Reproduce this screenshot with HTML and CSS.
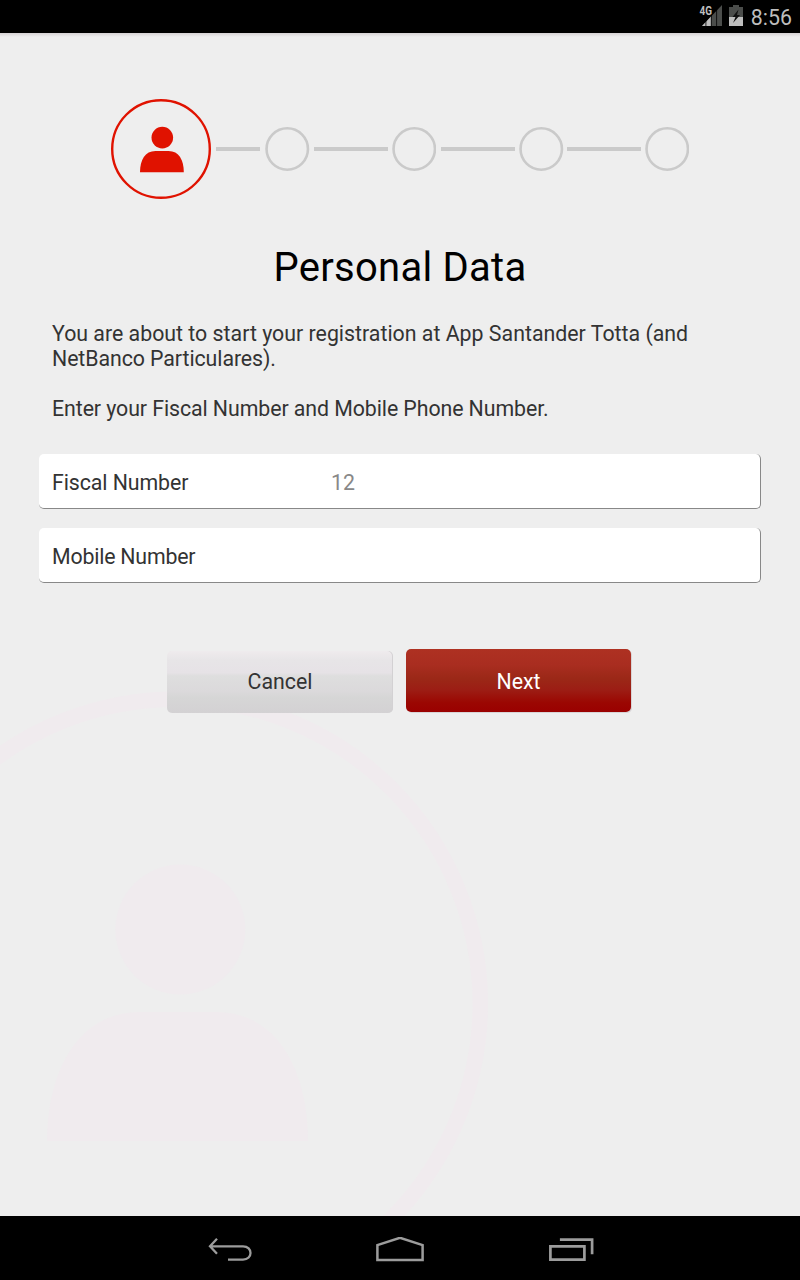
FILE: index.html
```html
<!DOCTYPE html>
<html lang="en">
<head>
<meta charset="utf-8">
<title>Personal Data</title>
<link rel="stylesheet" href="styles.css">
</head>
<body>
<div class="screen">
  <header class="status">
    <svg class="signal" width="26" height="28" viewBox="-2 -5 26 28">
      <path d="M3 21L23 0V21Z" fill="#4b4d4b"/>
      <path d="M3 21L12 11.5V21Z" fill="#bebebe"/>
      <path d="M6.9 0V21M12.3 0V21M17.6 0V21" stroke="#000" stroke-width=".8"/>
      <path d="M0 0H13V10.8H0Z" fill="#000"/>
      <text x="0.5" y="9.8" class="network" textLength="12.5" lengthAdjust="spacingAndGlyphs">4G</text>
    </svg>
    <svg class="battery" width="14" height="21" viewBox="0 0 14 21">
      <path d="M4 0H10V2H14V12H0V2H4Z" fill="#4b4d4b"/>
      <path d="M0 12H14V21H0Z" fill="#bebebe"/>
      <path d="M9.5 4.5L3.5 12H6.5L4 18L11 10H8Z" fill="#111"/>
    </svg>
    <span class="clock">8:56</span>
  </header>
  <main class="content">
    <svg class="watermark" width="488" height="526" viewBox="0 0 488 526">
      <circle cx="176" cy="313.5" r="304.3" fill="none" stroke="#f0ebee" stroke-width="15.5"/>
      <circle cx="180.3" cy="239.5" r="65" fill="#f0ebee"/>
      <path d="M47 451C47 381 78 322 140 322H216C278 322 308 381 308 451Z" fill="#f0ebee"/>
    </svg>
    <div class="steps">
      <svg class="step-active" width="100" height="100" viewBox="0 0 100 100">
        <circle cx="50" cy="50" r="48.8" fill="none" stroke="#e01200" stroke-width="2.4"/>
        <circle cx="51.3" cy="38.6" r="10.8" fill="#e01200"/>
        <path d="M29 73.2C29 61 34 52 44.5 52H57.5C68 52 72.8 61 72.8 73.2Z" fill="#e01200"/>
      </svg>
      <i class="line first"></i>
      <svg class="dot" viewBox="0 0 44 44"><circle cx="22" cy="22" r="20.7"/></svg>
      <i class="line"></i>
      <svg class="dot" viewBox="0 0 44 44"><circle cx="22" cy="22" r="20.7"/></svg>
      <i class="line late"></i>
      <svg class="dot" viewBox="0 0 44 44"><circle cx="22" cy="22" r="20.7"/></svg>
      <i class="line last"></i>
      <svg class="dot" viewBox="0 0 44 44"><circle cx="22" cy="22" r="20.7"/></svg>
    </div>
    <h1 class="title">Personal Data</h1>
    <div class="intro">
      <p>You are about to start your registration at App Santander Totta (and<br><span class="tight">NetBanco Particulares).</span></p>
      <p class="tight">Enter your Fiscal Number and Mobile Phone Number.</p>
    </div>
    <div class="fields">
      <div class="field"><span class="label">Fiscal Number</span><span class="value">12</span></div>
      <div class="field"><span class="label mobile">Mobile Number</span></div>
    </div>
    <div class="actions">
      <button class="btn cancel">Cancel</button>
      <button class="btn next">Next</button>
    </div>
  </main>
  <nav class="nav">
    <svg width="44" height="26" viewBox="0 0 44 26" fill="none" stroke="#9c9c9c" stroke-width="2.3">
      <path d="M9 1.8L2 9.3L9 16.8M2 9.3H35C45 9.3 45 22.6 35 22.6H20"/>
    </svg>
    <svg width="50" height="26" viewBox="0 0 50 26" fill="none" stroke="#9c9c9c" stroke-width="2.5">
      <path d="M1.4 22.9V8.1L24 .8L46.6 8.1V22.9Z"/>
    </svg>
    <svg class="recents" width="46" height="24" viewBox="0 0 46 24" fill="none" stroke="#9c9c9c" stroke-width="2.7">
      <path d="M1.4 8.4H35.4V21.6H1.4ZM10.9 1.6H43.1V16.2"/>
    </svg>
  </nav>
</div>
</body>
</html>
```
FILE: styles.css
```css
* { box-sizing: border-box; }
body { margin: 0; font-family: Roboto, sans-serif; }
.screen {
  width: 800px;
  height: 1280px;
  display: flex;
  flex-direction: column;
  background: #eee;
  overflow: hidden;
}
.status {
  height: 33px;
  flex: none;
  display: flex;
  justify-content: flex-end;
  padding-right: 8px;
  background: #000;
}
.signal { margin-right: 6px; overflow: visible; }
.battery { margin: 5px 8px 0 0; }
.network { font-family: Roboto, sans-serif; font-size: 13px; font-weight: 700; fill: #bebebe; }
.clock { font-size: 21.33px; line-height: 35px; color: #bebebe; }
.content {
  position: relative;
  flex: 1;
  padding-top: 66px;
  background: linear-gradient(#d6d2d4, #eee 4px);
}
.watermark { position: absolute; left: 0; bottom: 0; }
.steps {
  position: relative;
  display: flex;
  align-items: center;
  height: 100px;
  padding-left: 111px;
}
.step-active { flex: none; }
.line { flex: none; width: 74px; height: 4px; margin: 0 4px; background: #cacaca; }
.line.first { width: 44px; margin: 0 5px; }
.line.late { margin-left: 5px; }
.line.last { margin-left: 3px; }
.dot { flex: none; width: 44.5px; height: 44px; fill: none; stroke: #cacaca; stroke-width: 2.6; }
.title {
  position: relative;
  margin: 45px 0 0;
  text-align: center;
  font-size: 40px;
  line-height: 48px;
  font-weight: 400;
  letter-spacing: 0.25px;
  color: #000;
}
.intro {
  position: relative;
  padding: 29px 52px 0;
  font-size: 21.33px;
  line-height: 25px;
  color: #333;
}
.intro p { margin: 0 0 25px; white-space: nowrap; }
.tight { letter-spacing: -0.08px; }
.fields {
  position: relative;
  display: grid;
  gap: 19px;
  padding: 8px 39px 0;
}
.field {
  display: flex;
  align-items: center;
  height: 55px;
  padding: 2px 13px 0;
  border-right: 1px solid #888;
  border-bottom: 1px solid #888;
  border-radius: 5px;
  background: #fff;
  font-size: 21.33px;
  color: #333;
}
.label { width: 279px; letter-spacing: -0.08px; }
.label.mobile { letter-spacing: -0.2px; }
.value { color: #888; }
.actions {
  position: relative;
  display: flex;
  gap: 13px;
  padding: 66px 0 0 167px;
}
.btn {
  border: 0;
  border-radius: 5px;
  padding: 0;
  font-family: inherit;
  font-size: 21.33px;
}
.cancel {
  width: 226px;
  height: 62px;
  margin-top: 2px;
  padding-bottom: 1px;
  color: #333;
  background: linear-gradient(#efebed, #e7e5e7 15%, #e6e2e6 35%, #dedede 40%, #dbd9db 65%, #d6d6d6 75%, #d3d1d3);
  box-shadow: inset -1px 0 0 #d3d1d3;
}
.next {
  width: 225px;
  height: 63px;
  padding-top: 1px;
  color: #fff;
  background: linear-gradient(#ae3122, #a92d20 25%, #9b2817 47%, #9c1d14 65%, #9b0702 85%, #9a0000);
  box-shadow: 1px 1px 0 #d8d4d6;
}
.nav {
  flex: none;
  height: 64px;
  display: flex;
  align-items: center;
  gap: 124px;
  padding: 3px 0 0 208px;
  background: #000;
}
.recents { margin-left: -1px; }
```
